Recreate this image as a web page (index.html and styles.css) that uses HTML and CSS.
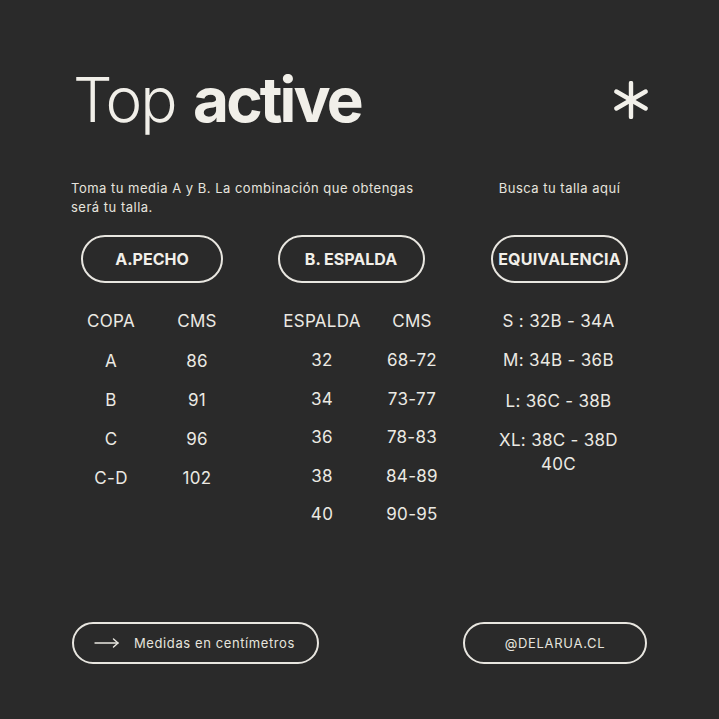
FILE: index.html
```html
<!DOCTYPE html>
<html lang="es">
<head>
<meta charset="utf-8">
<link rel="stylesheet" href="styles.css">
</head>
<body>
<main class="page">
  <header class="header">
    <h1 class="title"><span class="light">Top</span> <span class="bold">active</span></h1>
    <svg class="asterisk" width="36" height="38" viewBox="0 0 36 38" aria-hidden="true">
      <g stroke="#f2f0ea" stroke-width="4.4" stroke-linecap="round">
        <line x1="18" y1="2" x2="18" y2="36"/>
        <line x1="3.3" y1="10.5" x2="32.7" y2="27.5"/>
        <line x1="3.3" y1="27.5" x2="32.7" y2="10.5"/>
      </g>
    </svg>
  </header>

  <section class="grid intro">
    <p class="intro-text">Toma tu media A y B. La combinación que obtengas será tu talla.</p>
    <p class="intro-side">Busca tu talla aquí</p>
  </section>

  <section class="grid buttons">
    <div class="cell"><span class="pill pill-a">A.PECHO</span></div>
    <div class="cell"><span class="pill pill-b">B. ESPALDA</span></div>
    <div class="cell"><span class="pill pill-c">EQUIVALENCIA</span></div>
  </section>

  <section class="grid tables">
    <div class="table t1">
      <span class="head">COPA</span><span class="head">CMS</span>
      <span>A</span><span>86</span>
      <span>B</span><span>91</span>
      <span>C</span><span>96</span>
      <span>C-D</span><span>102</span>
    </div>
    <div class="table t2">
      <span class="head">ESPALDA</span><span class="head">CMS</span>
      <span>32</span><span>68-72</span>
      <span>34</span><span>73-77</span>
      <span>36</span><span>78-83</span>
      <span>38</span><span>84-89</span>
      <span>40</span><span>90-95</span>
    </div>
    <div class="table t3">
      <span>S : 32B - 34A</span>
      <span>M: 34B - 36B</span>
      <span class="r3">L: 36C - 38B</span>
      <span class="multi">XL: 38C - 38D<br>40C</span>
    </div>
  </section>

  <footer class="footer">
    <span class="pill pill-foot pill-left">
      <svg class="arrow" width="26" height="10" viewBox="0 0 26 10" aria-hidden="true">
        <g stroke="#e9e7e1" stroke-width="1.4" fill="none" stroke-linecap="round" stroke-linejoin="round">
          <line x1="1" y1="5" x2="24" y2="5"/>
          <polyline points="19.5,1 24,5 19.5,9"/>
        </g>
      </svg>
      <span>Medidas en centímetros</span>
    </span>
    <span class="pill pill-foot pill-right">@DELARUA.CL</span>
  </footer>
</main>
</body>
</html>
```

FILE: styles.css
```css
* { box-sizing: border-box; }

html, body {
  margin: 0;
  padding: 0;
  background: #2a2a2a;
}

body {
  font-family: Inter, "Liberation Sans", sans-serif;
  color: #eeece6;
}

.page {
  width: 719px;
  height: 719px;
  padding: 69px 71px 55px 71px;
  display: flex;
  flex-direction: column;
}

.header {
  display: flex;
  justify-content: space-between;
  align-items: center;
  height: 62px;
}

.title {
  margin: 0 0 0 2px;
  font-size: 62px;
  line-height: 1;
  color: #f1efe9;
  font-weight: 400;
}

.title .light { font-weight: 300; letter-spacing: -2px; }
.title .bold { font-weight: 700; letter-spacing: -2.9px; }

.asterisk { margin-right: -1px; margin-top: 0; }

.grid {
  display: grid;
  grid-template-columns: 160px 240px 177px;
}

.intro {
  margin-top: 48px;
  font-size: 13px;
  line-height: 19px;
  letter-spacing: 0.5px;
  color: #e6e4de;
}

.intro p { margin: 0; }

.intro-text {
  grid-column: 1 / 3;
  max-width: 362px;
}

.intro-side {
  text-align: center;
}

.buttons {
  margin-top: 18px;
}

.cell {
  display: flex;
  justify-content: center;
}

.pill {
  display: inline-flex;
  align-items: center;
  justify-content: center;
  border: 2px solid #e8e6e0;
  border-radius: 999px;
}

.buttons .pill {
  height: 48px;
  font-size: 16px;
  font-weight: 700;
  color: #f1efe9;
}

.pill-a { width: 142px; margin-left: 2px; }
.pill-b { width: 147px; }
.pill-c { width: 137px; letter-spacing: 0.2px; }

.tables {
  margin-top: 19px;
  align-items: start;
  font-size: 17px;
  letter-spacing: 0.3px;
  color: #ebe9e3;
}

.table {
  display: grid;
  align-content: start;
  text-align: center;
}

.table span { display: block; }

.t1 {
  grid-template-columns: 80px 80px;
  column-gap: 6px;
  grid-auto-rows: 39px;
  line-height: 39px;
}

.t1 .head { margin-top: 0; }
.t1 { grid-template-rows: 40px; }

.t2 {
  grid-template-columns: 88px 88px;
  column-gap: 2px;
  grid-template-rows: 39px;
  grid-auto-rows: 38.5px;
  line-height: 38.5px;
  margin-left: 47px;
}

.t3 {
  line-height: 39px;
  margin-left: -2px;
}

.t3 .r3 { margin-top: 2px; }

.t3 .multi {
  line-height: 24px;
  padding-top: 7px;
}

.footer {
  margin-top: auto;
  display: flex;
  justify-content: space-between;
  align-items: center;
}

.pill-foot {
  height: 42px;
  font-size: 13px;
  letter-spacing: 0.6px;
  color: #e6e4de;
}

.pill-left {
  width: 247px;
  margin-left: 1px;
  justify-content: flex-start;
  padding-left: 20px;
  gap: 14px;
}

.pill-right {
  width: 184px;
  margin-right: 1px;
  letter-spacing: 0.7px;
}
```
